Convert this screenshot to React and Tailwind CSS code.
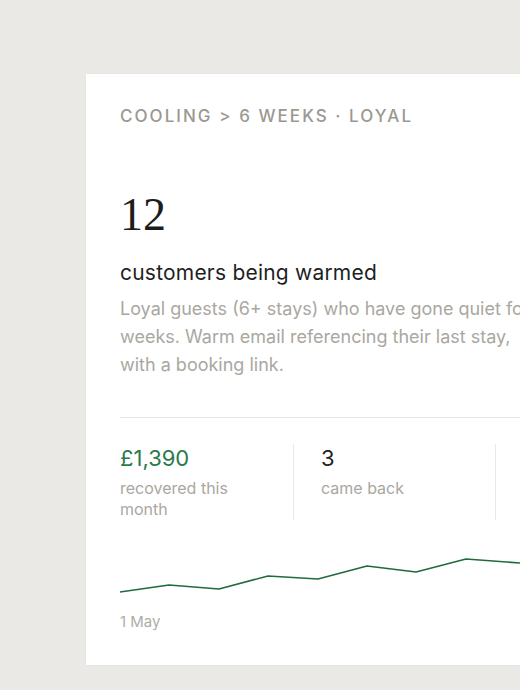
import React from 'react';

const points = [
  [0, 38], [49, 31], [99, 35], [148, 22], [198, 25], [247, 12], [296, 18], [346, 5], [400, 9],
];

const Sparkline = () => (
  <svg width="420" height="48" viewBox="0 0 420 48" className="block">
    <polyline
      points={points.map(([x, y]) => `${x},${y + 4}`).join(' ')}
      fill="none"
      stroke="#1f6b3e"
      strokeWidth="1.6"
      strokeLinejoin="round"
    />
  </svg>
);

const App = () => {
  return (
    <div className="h-[690px] w-[520px] overflow-hidden bg-[#ebe9e6] pt-[74px] pl-[86px] font-['Inter',sans-serif]">
      <div className="w-[520px] h-[591px] bg-white pl-[34px] pt-[32px] shadow-[0_0_2px_rgba(0,0,0,0.05)]">
        {/* breadcrumb */}
        <div className="text-[17px] leading-5 tracking-[0.12em] text-[#9b9892] font-medium">
          COOLING &gt; 6 WEEKS · LOYAL
        </div>

        {/* big number */}
        <div className="mt-[65px] text-[46px] leading-[48px] text-[#1c1c1c] font-['Liberation_Serif',serif]">
          12
        </div>

        <div className="mt-[20px] text-[21px] leading-7 tracking-[0.01em] text-[#1f1f1f]">customers being warmed</div>
        <p className="mt-[8px] w-[420px] text-[18px] leading-7 text-[#aaa7a1] whitespace-nowrap">
          Loyal guests (6+ stays) who have gone quiet for 6<br />
          weeks. Warm email referencing their last stay,<br />
          with a booking link.
        </p>

        <div className="mt-[38px] h-px w-[420px] bg-[#e6e4e0]" />

        {/* stats */}
        <div className="mt-[26px] flex">
          <div className="w-[174px] shrink-0 pr-4 border-r border-[#ebe9e6]">
            <div className="text-[22px] leading-7 text-[#2b7a4b]">£1,390</div>
            <div className="mt-[6px] text-[16px] leading-[21px] text-[#aaa7a1]">recovered this month</div>
          </div>
          <div className="w-[202px] shrink-0 pl-[27px] border-r border-[#ebe9e6]">
            <div className="text-[22px] leading-7 text-[#1f1f1f]">3</div>
            <div className="mt-[6px] text-[16px] leading-[21px] text-[#aaa7a1]">came back</div>
          </div>
          <div className="w-[100px] shrink-0" />
        </div>

        {/* chart */}
        <div className="mt-[30px]">
          <Sparkline />
        </div>
        <div className="mt-[14px] text-[15px] leading-5 text-[#b0ada7]">1 May</div>
      </div>
    </div>
  );
};

export default App;
